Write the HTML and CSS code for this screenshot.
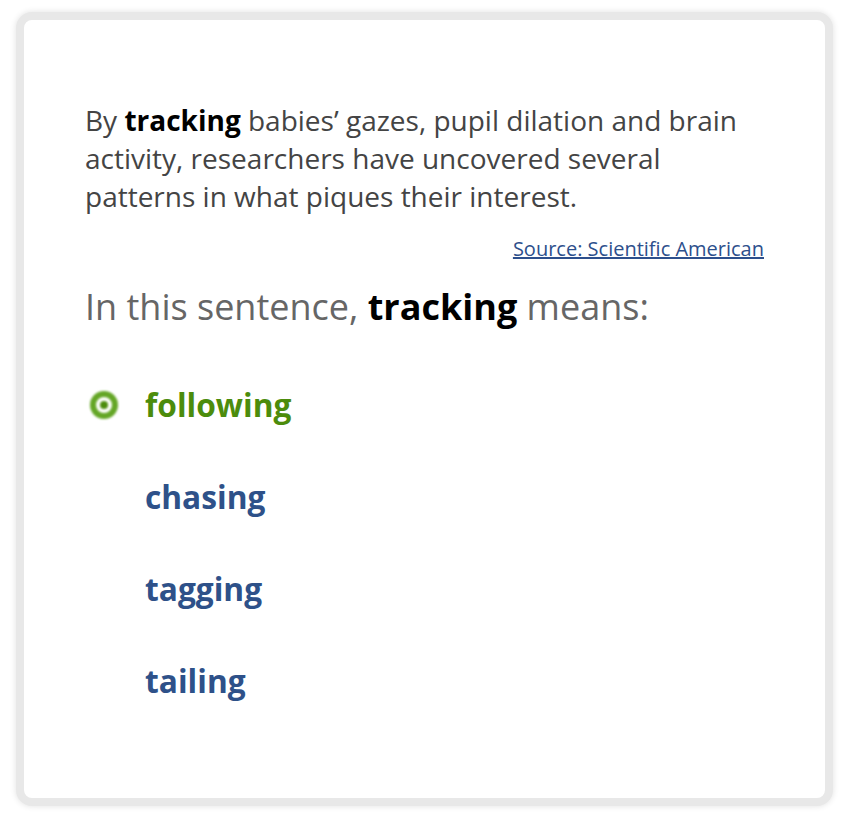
FILE: index.html
```html
<!DOCTYPE html>
<html>
<head>
<meta charset="utf-8">
<link rel="stylesheet" href="styles.css">
</head>
<body>
<div class="card">
  <p class="passage">By <b>tracking</b> babies’ gazes, pupil dilation and brain activity, researchers have uncovered several patterns in what piques their interest.</p>
  <div class="source"><a href="#">Source: Scientific American</a></div>
  <h2 class="question">In this sentence, <b>tracking</b> means:</h2>
  <ul class="options">
    <li class="option selected"><span class="radio"></span>following</li>
    <li class="option">chasing</li>
    <li class="option">tagging</li>
    <li class="option">tailing</li>
  </ul>
</div>
</body>
</html>
```
FILE: styles.css
```css
html, body {
  margin: 0;
  padding: 0;
  background: #fff;
}
body {
  padding: 12px 17px 14px 16px;
  font-family: "Open Sans", "Liberation Sans", sans-serif;
}
.card {
  box-sizing: border-box;
  width: 817px;
  height: 794px;
  border: 8px solid #e8e8e8;
  border-radius: 16px;
  box-shadow: 0 0 6px rgba(0,0,0,0.12);
  background: #fff;
  padding: 81px 61px 0 61px;
}
.passage {
  margin: 0;
  font-size: 28px;
  line-height: 38px;
  color: #444;
}
.passage b {
  color: #000;
  font-weight: 700;
}
.source {
  text-align: right;
  margin-top: 21px;
  font-size: 20px;
  line-height: 26px;
}
.source a {
  color: #2d4f8c;
  text-decoration: underline;
}
.question {
  margin: 22px 0 0 0;
  font-size: 36px;
  line-height: 46px;
  font-weight: 400;
  color: #666;
}
.question b {
  color: #000;
  font-weight: 700;
}
.options {
  list-style: none;
  margin: 52px 0 0 0;
  padding: 0 0 0 60px;
}
.option {
  position: relative;
  font-size: 31.7px;
  font-weight: 700;
  line-height: 46px;
  color: #2e5189;
  margin-bottom: 46px;
}
.option.selected {
  color: #4c8c0c;
}
.radio {
  position: absolute;
  left: -55px;
  top: 9px;
  width: 28px;
  height: 28px;
  box-sizing: border-box;
  border-radius: 50%;
  border: 6px solid #64a626;
  background: #fff;
  filter: blur(0.9px);
}
.radio::after {
  content: "";
  position: absolute;
  left: 4px;
  top: 4px;
  width: 8px;
  height: 8px;
  border-radius: 50%;
  background: #4c8c0c;
}
```
